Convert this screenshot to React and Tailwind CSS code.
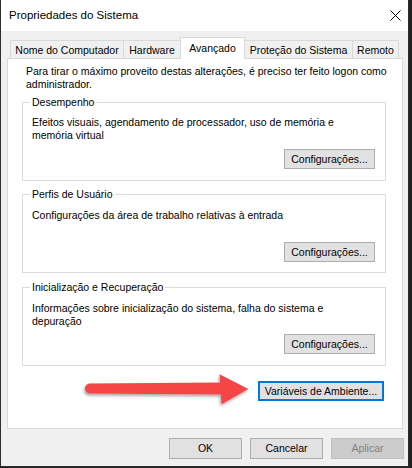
function Btn({ children, className = "" }) {
  return (
    <div
      className={
        "h-[20px] flex items-center justify-center border border-[#adadad] bg-[#e1e1e1] whitespace-nowrap " +
        className
      }
    >
      {children}
    </div>
  );
}

function Group({ title, children, className = "", textMt, btnMt, pb }) {
  return (
    <fieldset
      className={
        "ml-[14px] w-[364px] min-w-0 m-0 p-0 border border-[#dcdcdc] " + className
      }
    >
      <legend className="ml-[7px] px-[2px] py-0 leading-[13px] whitespace-nowrap">{title}</legend>
      <div className="pl-[9px] pr-[10px]" style={{ paddingBottom: pb }}>
        <div className="whitespace-nowrap" style={{ marginTop: textMt }}>
          {children}
        </div>
        <div className="flex justify-end" style={{ marginTop: btnMt }}>
          <Btn className="w-[91px]">Configurações...</Btn>
        </div>
      </div>
    </fieldset>
  );
}

function Arrow() {
  return (
    <svg
      className="absolute left-[72px] top-[306px]"
      width="180"
      height="45"
      viewBox="0 0 180 45"
    >
      <defs>
        <filter id="sh" x="-10%" y="-30%" width="120%" height="160%">
          <feDropShadow dx="-1" dy="2" stdDeviation="1.5" floodColor="#000" floodOpacity="0.35" />
        </filter>
      </defs>
      <g filter="url(#sh)" fill="#f44447">
        <path d="M10 18.6 L142 17.6 L142 29.4 L10 28.6 A5 5 0 0 1 10 18.6 Z" />
        <path d="M139.5 9.3 L168.3 24 L141.5 39.3 Z" />
      </g>
    </svg>
  );
}

export default function App() {
  const tabBase = "h-[18px] flex justify-center pt-[3px] border-[#d9d9d9] bg-[#f0f0f0] whitespace-nowrap";
  return (
    <div className="w-[412px] h-[468px] bg-[#202020] font-['Liberation_Sans',Arial,sans-serif] text-[10.5px] leading-[13px] text-black overflow-hidden">
      <div className="w-[409px] h-[467px] border-x border-b border-[#2f2f2f] bg-[#f0f0f0] flex flex-col">
        {/* Title bar */}
        <div className="h-[31px] shrink-0 bg-white flex items-center justify-between pl-[8px] pr-[7px]">
          <span className="text-[11.5px] leading-[31px]">Propriedades do Sistema</span>
          <svg width="11" height="11" viewBox="0 0 11 11">
            <path d="M0.5 0.5 L10.5 10.5 M10.5 0.5 L0.5 10.5" stroke="#000" strokeWidth="1" fill="none" />
          </svg>
        </div>

        <div className="flex flex-col pl-[6px] pr-[4px]">
          {/* Tabs */}
          <div className="mt-[6px] h-[21px] flex items-end pl-[3px]">
            <div className={tabBase + " w-[113px] border-l border-t"}>Nome do Computador</div>
            <div className={tabBase + " w-[57px] border-l border-t"}>Hardware</div>
            <div className="relative z-10 h-[22px] -mb-px w-[65px] flex justify-center pt-[4px] border-l border-t border-r border-[#d9d9d9] bg-white whitespace-nowrap">
              Avançado
            </div>
            <div className={tabBase + " w-[108px] border-t border-r"}>Proteção do Sistema</div>
            <div className={tabBase + " w-[46px] border-t border-r"}>Remoto</div>
          </div>

          {/* Panel */}
          <div className="relative w-[396px] h-[371px] border border-[#d9d9d9] bg-white flex flex-col">
            <div className="mt-[6px] ml-[18px] whitespace-nowrap">
              Para tirar o máximo proveito destas alterações, é preciso ter feito logon como
              <br />
              administrador.
            </div>

            <Group title="Desempenho" className="mt-[5px]" textMt={7} btnMt={7} pb={11}>
              Efeitos visuais, agendamento de processador, uso de memória e
              <br />
              memória virtual
            </Group>

            <Group title="Perfis de Usuário" className="mt-[7px]" textMt={8} btnMt={20} pb={10}>
              Configurações da área de trabalho relativas à entrada
            </Group>

            <Group title="Inicialização e Recuperação" className="mt-[8px]" textMt={8} btnMt={6} pb={11}>
              Informações sobre inicialização do sistema, falha do sistema e
              <br />
              depuração
            </Group>

            <div className="mt-[15px] flex justify-end pr-[18px]">
              <div className="w-[126px] h-[20px] flex items-center justify-center border-2 border-[#0078d7] bg-[#e1e1e1] whitespace-nowrap">
                Variáveis de Ambiente...
              </div>
            </div>

            <Arrow />
          </div>

          {/* Bottom buttons */}
          <div className="mt-[9px] flex justify-end gap-[8px]">
            <Btn className="w-[73px] h-[21px]">OK</Btn>
            <Btn className="w-[73px] h-[21px]">Cancelar</Btn>
            <div className="w-[73px] h-[21px] flex items-center justify-center border border-[#bfbfbf] bg-[#cccccc] text-[#838383]">
              Aplicar
            </div>
          </div>
        </div>
      </div>
    </div>
  );
}
